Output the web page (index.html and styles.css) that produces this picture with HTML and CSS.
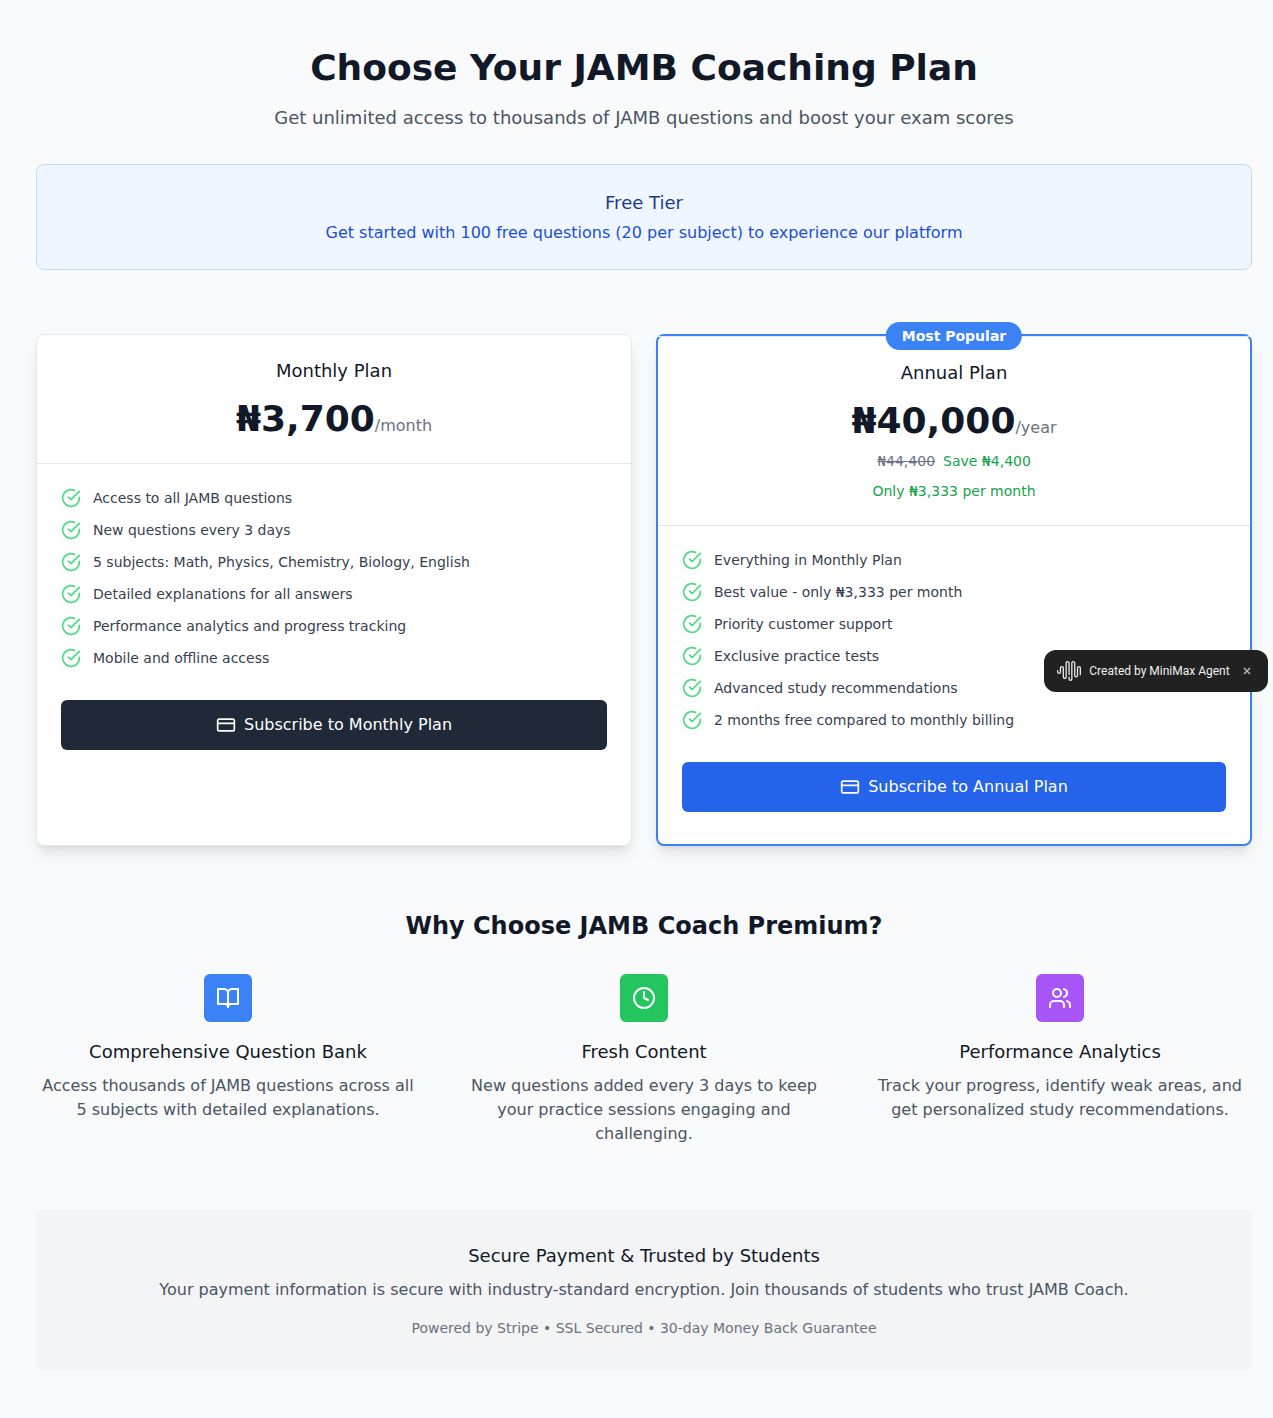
FILE: index.html
```html
<!DOCTYPE html>
<html lang="en">
<head>
<meta charset="utf-8">
<title>JAMB Coach Pricing</title>
<link rel="stylesheet" href="styles.css">
</head>
<body>
<svg class="sprite" aria-hidden="true">
  <symbol id="check" viewBox="0 0 24 24"><path d="M22 11.08V12a10 10 0 1 1-5.93-9.14"/><path d="m9 11 3 3L22 4"/></symbol>
  <symbol id="card" viewBox="0 0 24 24"><rect width="20" height="14" x="2" y="5" rx="2"/><path d="M2 10h20"/></symbol>
  <symbol id="book" viewBox="0 0 24 24"><path d="M2 3h6a4 4 0 0 1 4 4v14a3 3 0 0 0-3-3H2z"/><path d="M22 3h-6a4 4 0 0 0-4 4v14a3 3 0 0 1 3-3h7z"/></symbol>
  <symbol id="clock" viewBox="0 0 24 24"><circle cx="12" cy="12" r="10"/><path d="M12 6v6l4 2"/></symbol>
  <symbol id="users" viewBox="0 0 24 24"><path d="M16 21v-2a4 4 0 0 0-4-4H6a4 4 0 0 0-4 4v2"/><circle cx="9" cy="7" r="4"/><path d="M22 21v-2a4 4 0 0 0-3-3.87"/><path d="M16 3.13a4 4 0 0 1 0 7.75"/></symbol>
</svg>
<main class="page">
  <header class="intro">
    <h1>Choose Your JAMB Coaching Plan</h1>
    <p>Get unlimited access to thousands of JAMB questions and boost your exam scores</p>
  </header>

  <section class="free-tier">
    <h3>Free Tier</h3>
    <p>Get started with 100 free questions (20 per subject) to experience our platform</p>
  </section>

  <section class="plans">
    <article class="plan">
      <div class="plan-head">
        <h3>Monthly Plan</h3>
        <p class="price"><span class="amount">₦3,700</span><span class="period">/month</span></p>
      </div>
      <div class="plan-body">
        <ul>
          <li><svg class="icon"><use href="#check"/></svg><span>Access to all JAMB questions</span></li>
          <li><svg class="icon"><use href="#check"/></svg><span>New questions every 3 days</span></li>
          <li><svg class="icon"><use href="#check"/></svg><span>5 subjects: Math, Physics, Chemistry, Biology, English</span></li>
          <li><svg class="icon"><use href="#check"/></svg><span>Detailed explanations for all answers</span></li>
          <li><svg class="icon"><use href="#check"/></svg><span>Performance analytics and progress tracking</span></li>
          <li><svg class="icon"><use href="#check"/></svg><span>Mobile and offline access</span></li>
        </ul>
        <button class="subscribe" type="button"><svg class="icon"><use href="#card"/></svg>Subscribe to Monthly Plan</button>
      </div>
    </article>

    <article class="plan popular">
      <span class="ribbon">Most Popular</span>
      <div class="plan-head">
        <h3>Annual Plan</h3>
        <p class="price"><span class="amount">₦40,000</span><span class="period">/year</span></p>
        <p class="saving"><s>₦44,400</s><span>Save ₦4,400</span></p>
        <p class="per-month">Only ₦3,333 per month</p>
      </div>
      <div class="plan-body">
        <ul>
          <li><svg class="icon"><use href="#check"/></svg><span>Everything in Monthly Plan</span></li>
          <li><svg class="icon"><use href="#check"/></svg><span>Best value - only ₦3,333 per month</span></li>
          <li><svg class="icon"><use href="#check"/></svg><span>Priority customer support</span></li>
          <li><svg class="icon"><use href="#check"/></svg><span>Exclusive practice tests</span></li>
          <li><svg class="icon"><use href="#check"/></svg><span>Advanced study recommendations</span></li>
          <li><svg class="icon"><use href="#check"/></svg><span>2 months free compared to monthly billing</span></li>
        </ul>
        <button class="subscribe primary" type="button"><svg class="icon"><use href="#card"/></svg>Subscribe to Annual Plan</button>
      </div>
    </article>
  </section>

  <section class="why">
    <h2>Why Choose JAMB Coach Premium?</h2>
    <div class="features">
      <div class="feature">
        <div class="tile blue"><svg class="icon"><use href="#book"/></svg></div>
        <h3>Comprehensive Question Bank</h3>
        <p>Access thousands of JAMB questions across all 5 subjects with detailed explanations.</p>
      </div>
      <div class="feature">
        <div class="tile green"><svg class="icon"><use href="#clock"/></svg></div>
        <h3>Fresh Content</h3>
        <p>New questions added every 3 days to keep your practice sessions engaging and challenging.</p>
      </div>
      <div class="feature">
        <div class="tile purple"><svg class="icon"><use href="#users"/></svg></div>
        <h3>Performance Analytics</h3>
        <p>Track your progress, identify weak areas, and get personalized study recommendations.</p>
      </div>
    </div>
  </section>

  <section class="trust">
    <h3>Secure Payment &amp; Trusted by Students</h3>
    <p>Your payment information is secure with industry-standard encryption. Join thousands of students who trust JAMB Coach.</p>
    <p class="fine">Powered by Stripe • SSL Secured • 30-day Money Back Guarantee</p>
  </section>
</main>

<aside class="maker">
  <svg class="wave" viewBox="0 0 24 24"><path d="M16.278 2c1.156 0 2.093.927 2.093 2.07v12.501a.74.74 0 00.744.709.74.74 0 00.743-.709V9.099a2.06 2.06 0 012.071-2.049A2.06 2.06 0 0124 9.1v6.561a.649.649 0 01-.652.645.649.649 0 01-.653-.645V9.1a.762.762 0 00-.766-.758.762.762 0 00-.766.758v7.472a2.037 2.037 0 01-2.048 2.026 2.037 2.037 0 01-2.048-2.026v-12.5a.785.785 0 00-.788-.753.785.785 0 00-.789.752l-.001 15.904A2.037 2.037 0 0113.441 22a2.037 2.037 0 01-2.048-2.026V18.04c0-.356.292-.645.652-.645.36 0 .652.289.652.645v1.934c0 .263.142.506.372.638.23.131.514.131.744 0a.734.734 0 00.372-.638V4.07c0-1.143.937-2.07 2.093-2.07zm-5.674 0c1.156 0 2.093.927 2.093 2.07v11.523a.648.648 0 01-.652.645.648.648 0 01-.652-.645V4.07a.785.785 0 00-.789-.78.785.785 0 00-.789.78v14.013a2.06 2.06 0 01-2.07 2.048 2.06 2.06 0 01-2.071-2.048V9.1a.762.762 0 00-.766-.758.762.762 0 00-.766.758v3.8a2.06 2.06 0 01-2.071 2.049A2.06 2.06 0 010 12.9v-1.378c0-.357.292-.646.652-.646.36 0 .653.29.653.646V12.9c0 .418.343.757.766.757s.766-.339.766-.757V9.099a2.06 2.06 0 012.07-2.048 2.06 2.06 0 012.071 2.048v8.984c0 .419.343.758.767.758.423 0 .766-.339.766-.758V4.07c0-1.143.937-2.07 2.093-2.07z"/></svg>
  <span>Created by MiniMax Agent</span>
  <svg class="close" viewBox="0 0 8 8"><path d="M1 1l6 6M7 1L1 7"/></svg>
</aside>
</body>
</html>
```
FILE: styles.css
```css
* { box-sizing: border-box; margin: 0; padding: 0; }
body {
  background: #f9fafb;
  color: #111827;
  font: 16px/24px "DejaVu Sans", sans-serif;
}
.sprite { display: none; }
.icon {
  width: 20px;
  height: 20px;
  flex: none;
  fill: none;
  stroke: currentColor;
  stroke-width: 2;
  stroke-linecap: round;
  stroke-linejoin: round;
}
.page { padding: 48px 21px 48px 36px; }
h3 { font-size: 18px; line-height: 28px; font-weight: 400; }

.intro { text-align: center; }
h1 { font-size: 36px; line-height: 40px; font-weight: 700; }
.intro p { margin-top: 16px; font-size: 18px; line-height: 28px; color: #4b5563; }

.free-tier {
  margin-top: 32px;
  padding: 24px;
  border: 1px solid #bfdbfe;
  border-radius: 8px;
  background: #eff6ff;
  color: #1d4ed8;
  text-align: center;
}
.free-tier h3 { color: #1e3a8a; }
.free-tier p { margin-top: 4px; }

.plans {
  display: grid;
  grid-template-columns: 1fr 1fr;
  gap: 24px;
  margin-top: 64px;
}
.plan {
  position: relative;
  border: 1px solid #e5e7eb;
  border-radius: 8px;
  background: #fff;
  box-shadow: 0 10px 15px -3px rgba(0, 0, 0, .1), 0 4px 6px -4px rgba(0, 0, 0, .1);
}
.popular { border: 2px solid #3b82f6; }
.popular .plan-head { border-top: 1px solid #e5e7eb; }
.ribbon {
  position: absolute;
  top: 0;
  left: 50%;
  transform: translate(-50%, -50%);
  padding: 4px 16px;
  border-radius: 14px;
  background: #3b82f6;
  color: #fff;
  font-size: 14px;
  line-height: 20px;
  font-weight: 600;
  white-space: nowrap;
}
.plan-head { padding: 24px; text-align: center; }
.plan-head h3 { line-height: 24px; }
.price { margin-top: 16px; }
.amount { font-size: 36px; line-height: 40px; font-weight: 700; }
.period { color: #6b7280; }
.saving {
  display: flex;
  justify-content: center;
  gap: 8px;
  margin-top: 8px;
  font-size: 14px;
  color: #16a34a;
}
.saving s { color: #6b7280; }
.per-month { margin-top: 8px; font-size: 14px; line-height: 20px; color: #16a34a; }

.plan-body { padding: 24px 24px 32px; border-top: 1px solid #e5e7eb; }
.plan-body ul { display: flex; flex-direction: column; gap: 12px; list-style: none; }
.plan-body li {
  display: flex;
  gap: 12px;
  font-size: 14px;
  line-height: 20px;
  color: #374151;
}
.plan-body li .icon { color: #4ade80; }
.subscribe {
  display: flex;
  align-items: center;
  justify-content: center;
  gap: 8px;
  width: 100%;
  margin-top: 32px;
  padding: 12px;
  border: 1px solid transparent;
  border-radius: 6px;
  background: #1f2937;
  color: #fff;
  font: inherit;
}
.primary { background: #2563eb; }

.why { margin-top: 64px; text-align: center; }
h2 { font-size: 24px; line-height: 32px; font-weight: 700; }
.features {
  display: grid;
  grid-template-columns: repeat(3, 1fr);
  gap: 32px;
  margin-top: 32px;
}
.feature { display: flex; flex-direction: column; align-items: center; }
.tile {
  display: flex;
  align-items: center;
  justify-content: center;
  width: 48px;
  height: 48px;
  border-radius: 6px;
  color: #fff;
}
.tile .icon { width: 24px; height: 24px; }
.blue { background: #3b82f6; }
.green { background: #22c55e; }
.purple { background: #a855f7; }
.feature h3 { margin-top: 16px; }
.feature p { margin-top: 8px; color: #4b5563; }

.trust {
  margin-top: 64px;
  padding: 32px;
  border-radius: 8px;
  background: #f3f4f6;
  text-align: center;
}
.trust p { margin-top: 8px; color: #4b5563; }
.trust .fine { margin-top: 16px; font-size: 14px; line-height: 20px; color: #6b7280; }

.maker {
  position: fixed;
  top: 650px;
  right: 5px;
  display: flex;
  align-items: center;
  width: 224px;
  height: 42px;
  padding: 0 17px 0 13.3px;
  border-radius: 12px;
  background: #212121;
  color: #f0f0f0;
  font: 12px/18px Roboto, sans-serif;
}
.maker span { margin-left: 8px; white-space: nowrap; }
.wave { width: 24px; height: 24px; fill: #e8e8e8; }
.close {
  width: 8px;
  height: 8px;
  margin-left: auto;
  stroke: #bdbdbd;
  stroke-width: 1.4;
}
```
